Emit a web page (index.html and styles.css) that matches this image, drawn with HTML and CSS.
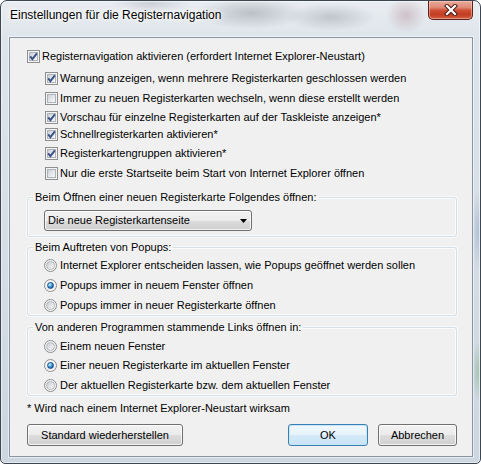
FILE: index.html
```html
<!DOCTYPE html>
<html lang="de">
<head>
<meta charset="utf-8">
<title>Einstellungen für die Registernavigation</title>
<link rel="stylesheet" href="styles.css">
</head>
<body>
<div class="window">
  <div class="titlebar">
    <span class="title">Einstellungen für die Registernavigation</span>
    <div class="close">
      <svg width="14" height="12" viewBox="0 0 14 12">
        <path d="M3 2 L11 10 M11 2 L3 10" stroke="#4a1d16" stroke-width="4.2" stroke-linecap="square" fill="none"/>
        <path d="M3 2 L11 10 M11 2 L3 10" stroke="#ffffff" stroke-width="2.2" stroke-linecap="square" fill="none"/>
      </svg>
    </div>
  </div>
  <div class="client">
    <div class="row">
      <span class="cb"><svg class="tick" width="13" height="13" viewBox="0 0 13 13"><path d="M3.2 6.4 L5.4 9.2 L9.9 3.3" stroke="#3b5186" stroke-width="1.9" fill="none"/></svg></span>
      <span>Registernavigation aktivieren (erfordert Internet Explorer-Neustart)</span>
    </div>
    <div class="sub">
      <div class="row mt9">
        <span class="cb"><svg class="tick" width="13" height="13" viewBox="0 0 13 13"><path d="M3.2 6.4 L5.4 9.2 L9.9 3.3" stroke="#3b5186" stroke-width="1.9" fill="none"/></svg></span>
        <span>Warnung anzeigen, wenn mehrere Registerkarten geschlossen werden</span>
      </div>
      <div class="row mt7">
        <span class="cb"></span>
        <span>Immer zu neuen Registerkarten wechseln, wenn diese erstellt werden</span>
      </div>
      <div class="row mt6">
        <span class="cb"><svg class="tick" width="13" height="13" viewBox="0 0 13 13"><path d="M3.2 6.4 L5.4 9.2 L9.9 3.3" stroke="#3b5186" stroke-width="1.9" fill="none"/></svg></span>
        <span>Vorschau für einzelne Registerkarten auf der Taskleiste anzeigen*</span>
      </div>
      <div class="row mt4">
        <span class="cb"><svg class="tick" width="13" height="13" viewBox="0 0 13 13"><path d="M3.2 6.4 L5.4 9.2 L9.9 3.3" stroke="#3b5186" stroke-width="1.9" fill="none"/></svg></span>
        <span>Schnellregisterkarten aktivieren*</span>
      </div>
      <div class="row mt6">
        <span class="cb"><svg class="tick" width="13" height="13" viewBox="0 0 13 13"><path d="M3.2 6.4 L5.4 9.2 L9.9 3.3" stroke="#3b5186" stroke-width="1.9" fill="none"/></svg></span>
        <span>Registerkartengruppen aktivieren*</span>
      </div>
      <div class="row mt7">
        <span class="cb"></span>
        <span>Nur die erste Startseite beim Start von Internet Explorer öffnen</span>
      </div>
    </div>

    <fieldset class="group g1">
      <legend>Beim Öffnen einer neuen Registerkarte Folgendes öffnen:</legend>
      <div class="gbody b1">
        <div class="select">
          <span>Die neue Registerkartenseite</span>
          <svg width="7" height="4" viewBox="0 0 7 4"><polygon points="0,0 7,0 3.5,4" fill="#000"/></svg>
        </div>
      </div>
    </fieldset>

    <fieldset class="group g2">
      <legend>Beim Auftreten von Popups:</legend>
      <div class="gbody b2">
        <div class="row"><span class="rb"></span><span>Internet Explorer entscheiden lassen, wie Popups geöffnet werden sollen</span></div>
        <div class="row mt7"><span class="rb on"></span><span>Popups immer in neuem Fenster öffnen</span></div>
        <div class="row mt7"><span class="rb"></span><span>Popups immer in neuer Registerkarte öffnen</span></div>
      </div>
    </fieldset>

    <fieldset class="group g3">
      <legend>Von anderen Programmen stammende Links öffnen in:</legend>
      <div class="gbody b3">
        <div class="row"><span class="rb"></span><span>Einem neuen Fenster</span></div>
        <div class="row mt6"><span class="rb on"></span><span>Einer neuen Registerkarte im aktuellen Fenster</span></div>
        <div class="row mt7"><span class="rb"></span><span>Der aktuellen Registerkarte bzw. dem aktuellen Fenster</span></div>
      </div>
    </fieldset>

    <p class="note">* Wird nach einem Internet Explorer-Neustart wirksam</p>

    <div class="buttons">
      <button class="btn std">Standard wiederherstellen</button>
      <button class="btn ok">OK</button>
      <button class="btn cancel">Abbrechen</button>
    </div>
  </div>
</div>
</body>
</html>
```

FILE: styles.css
```css
html, body {
  margin: 0;
  padding: 0;
}
body {
  width: 481px;
  height: 464px;
  overflow: hidden;
  font-family: "Liberation Sans", Arial, sans-serif;
  font-size: 11px;
  color: #000;
  background: #ffffff;
}
.window {
  box-sizing: border-box;
  width: 481px;
  height: 464px;
  border: 1px solid #3c4651;
  border-radius: 7px 7px 5px 5px;
  display: flex;
  flex-direction: column;
  background:
    radial-gradient(ellipse 55px 16px at 250px 12px, rgba(110,115,125,0.35), rgba(110,115,125,0) 100%),
    radial-gradient(ellipse 45px 14px at 330px 16px, rgba(110,115,125,0.30), rgba(110,115,125,0) 100%),
    radial-gradient(ellipse 20px 18px at 405px 14px, rgba(150,90,100,0.28), rgba(150,90,100,0) 100%),
    radial-gradient(ellipse 40px 10px at 150px 2px, rgba(120,125,135,0.25), rgba(120,125,135,0) 100%),
    radial-gradient(ellipse 6px 30px at 477px 370px, rgba(120,170,120,0.45), rgba(120,170,120,0) 100%),
    radial-gradient(ellipse 6px 40px at 477px 230px, rgba(110,140,180,0.35), rgba(110,140,180,0) 100%),
    linear-gradient(to bottom, #e9edf1 0px, #dde4eb 40px, #ccd6e0 100%);
  box-shadow: inset 0 0 0 1px rgba(255,255,255,0.55);
}
.titlebar {
  height: 36px;
  display: flex;
  align-items: flex-start;
  padding: 0 7px 0 9px;
}
.title {
  margin-top: 7px;
  font-family: "Liberation Sans", Arial, sans-serif;
  font-size: 12px;
  line-height: 14px;
  color: #000;
  text-shadow: 0 0 6px #fff, 0 0 10px #fff, 0 0 3px #fff;
}
.close {
  margin-left: auto;
  box-sizing: border-box;
  width: 45px;
  height: 19px;
  border: 1px solid #5a2219;
  border-top: none;
  border-radius: 0 0 5px 5px;
  background: linear-gradient(to bottom, #e9aa9b 0%, #df8b78 35%, #cf5035 52%, #c43c21 75%, #d2603f 100%);
  box-shadow: inset 0 0 0 1px rgba(255,220,210,0.45);
  display: flex;
  align-items: center;
  justify-content: center;
}
.client {
  box-sizing: border-box;
  width: 464px;
  height: 420px;
  margin-left: 8px;
  border: 1px solid #8995a2;
  background: #f0f0f0;
  padding: 12px 15px 0 17px;
  box-shadow: 0 0 0 1px rgba(255,255,255,0.5);
}
.row {
  display: flex;
  align-items: center;
  gap: 2px;
  height: 13px;
  line-height: 13px;
  white-space: nowrap;
}
.sub {
  margin-left: 18px;
}
.mt4 { margin-top: 4px; }
.mt6 { margin-top: 6px; }
.mt7 { margin-top: 7px; }
.mt9 { margin-top: 9px; }

.cb {
  position: relative;
  flex: none;
  box-sizing: border-box;
  width: 13px;
  height: 13px;
  border: 1px solid #8e8f8f;
  background: #f4f4f4;
  display: flex;
  align-items: center;
  justify-content: center;
}
.cb::before {
  content: "";
  box-sizing: border-box;
  width: 9px;
  height: 9px;
  border: 1px solid #aeb3b9;
  background: linear-gradient(135deg, #cbcfd5 0%, #e6e8eb 55%, #f7f7f7 100%);
}
.tick {
  position: absolute;
  left: -1px;
  top: -1px;
}
.rb {
  flex: none;
  box-sizing: border-box;
  width: 13px;
  height: 13px;
  border: 1px solid #8e8f8f;
  border-radius: 50%;
  background: #f4f4f4;
  display: flex;
  align-items: center;
  justify-content: center;
  margin-right: 1px;
}
.rb::before {
  content: "";
  box-sizing: border-box;
  width: 9px;
  height: 9px;
  border-radius: 50%;
  border: 1px solid #b3b7bd;
  background: linear-gradient(135deg, #c9cdd3 0%, #e4e6e9 55%, #f8f8f8 100%);
}
.rb.on::before {
  width: 7px;
  height: 7px;
  border: 1px solid #1d4f8c;
  background: radial-gradient(circle at 35% 32%, #d6f1ff 0%, #6fc0f0 30%, #2a78c6 60%, #134b8f 100%);
}

.group {
  box-sizing: border-box;
  width: 430px;
  margin: 0;
  padding: 0;
  min-width: 0;
  border: 1px solid #d5dfe5;
  border-radius: 3px;
  box-shadow: inset 0 0 0 1px #fbfbfb, 0 0 0 1px rgba(255,255,255,0.6);
}
.group legend {
  margin-left: 5px;
  padding: 0 2px;
  line-height: 13px;
  font: inherit;
  line-height: 13px;
}
.g1 { margin-top: 11px; }
.g2 { margin-top: 4px; }
.g3 { margin-top: 5px; }
.gbody {
  padding-left: 16px;
}
.b1 { padding-top: 6px; padding-bottom: 5px; }
.b2 { padding-top: 5px; padding-bottom: 3px; }
.b3 { padding-top: 6px; padding-bottom: 3px; }

.select {
  box-sizing: border-box;
  width: 208px;
  height: 21px;
  border: 1px solid #707070;
  border-radius: 3px;
  background: linear-gradient(to bottom, #f2f2f2 0%, #ebebeb 50%, #dddddd 50%, #cfcfcf 100%);
  box-shadow: inset 0 0 0 1px rgba(255,255,255,0.75);
  display: flex;
  align-items: center;
  justify-content: space-between;
  padding: 0 4px 0 3px;
  line-height: 13px;
}

.note {
  margin: 6px 0 0 0;
  line-height: 13px;
  height: 13px;
}
.buttons {
  margin-top: 9px;
  display: flex;
  align-items: center;
}
.btn {
  box-sizing: border-box;
  height: 22px;
  padding: 0;
  border: 1px solid #707070;
  border-radius: 3px;
  background: linear-gradient(to bottom, #f2f2f2 0%, #ebebeb 50%, #dddddd 50%, #cfcfcf 100%);
  box-shadow: inset 0 0 0 1px rgba(255,255,255,0.75);
  font-family: "Liberation Sans", Arial, sans-serif;
  font-size: 11px;
  color: #000;
  line-height: 13px;
}
.std { width: 156px; }
.ok {
  width: 80px;
  margin-left: auto;
  border-color: #3c7fb1;
  background: linear-gradient(to bottom, #f1f8fd 0%, #e6f3fb 50%, #d5eaf8 50%, #c8e3f5 100%);
  box-shadow: inset 0 0 0 1px #c4e6fb;
}
.cancel {
  width: 79px;
  margin-left: 10px;
}
```
